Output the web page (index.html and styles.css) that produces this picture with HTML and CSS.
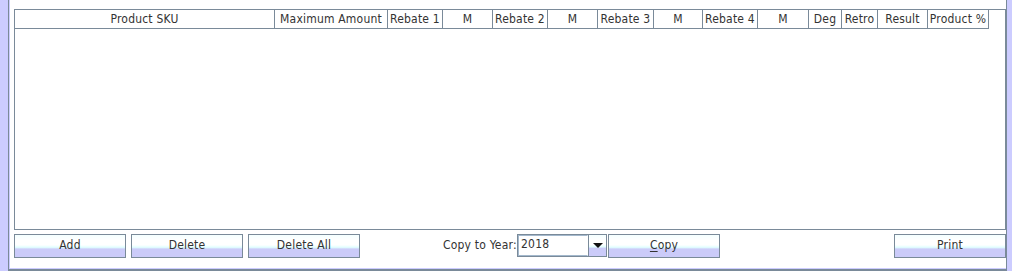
FILE: index.html
```html
<!DOCTYPE html>
<html>
<head>
<meta charset="utf-8">
<link rel="stylesheet" href="styles.css">
</head>
<body>
<div class="frame">
  <div class="panel">
    <div class="table">
      <div class="thead">
        <div class="th w-sku">Product SKU</div>
        <div class="th w-max">Maximum Amount</div>
        <div class="th w-55">Rebate 1</div>
        <div class="th w-50">M</div>
        <div class="th w-55">Rebate 2</div>
        <div class="th w-50">M</div>
        <div class="th w-56">Rebate 3</div>
        <div class="th w-49">M</div>
        <div class="th w-55">Rebate 4</div>
        <div class="th w-51">M</div>
        <div class="th w-deg">Deg</div>
        <div class="th w-retro">Retro</div>
        <div class="th w-50">Result</div>
        <div class="th w-pct">Product %</div>
        <div class="th-filler"></div>
      </div>
      <div class="tbody"></div>
    </div>
    <div class="toolbar">
      <button class="btn">Add</button>
      <button class="btn">Delete</button>
      <button class="btn">Delete All</button>
      <span class="year-label">Copy to Year:</span>
      <div class="combo">
        <div class="combo-field">2018</div>
        <div class="combo-arrow"><span class="tri"></span></div>
      </div>
      <button class="btn btn-copy"><u>C</u>opy</button>
      <button class="btn btn-print">Print</button>
    </div>
  </div>
</div>
</body>
</html>
```

FILE: styles.css
```css
html, body {
  margin: 0;
  padding: 0;
  background: #ffffff;
}

body {
  font-family: "DejaVu Sans Condensed", "DejaVu Sans", sans-serif;
  font-size: 12px;
  color: #333333;
}

.frame {
  width: 1012px;
  height: 271px;
  box-sizing: border-box;
  padding: 0 5px 0 8px;
  background: #ccccff;
}

.panel {
  height: 271px;
  box-sizing: border-box;
  border-left: 1px solid #7a8a99;
  border-right: 1px solid #7a8a99;
  border-bottom: 2px solid #7a8a99;
  background: #ffffff;
  box-shadow: inset 1px -1px 0 #ccccff;
  padding: 9px 0 0 5px;
  display: flex;
  flex-direction: column;
}

.table {
  width: 992px;
  height: 221px;
  box-sizing: border-box;
  border: 1px solid #7a8a99;
  background: #ffffff;
  display: flex;
  flex-direction: column;
}

.thead {
  display: flex;
  height: 19px;
  flex: none;
}

.th {
  box-sizing: border-box;
  height: 19px;
  border-right: 1px solid #7a8a99;
  border-bottom: 1px solid #7a8a99;
  text-align: center;
  line-height: 18px;
  white-space: nowrap;
  overflow: hidden;
  color: #333333;
  letter-spacing: 0.2px;
}

.th-filler {
  flex: 1;
}

.w-sku { width: 260px; }
.w-max { width: 113px; }
.w-55 { width: 55px; }
.w-50 { width: 50px; }
.w-56 { width: 56px; }
.w-49 { width: 49px; }
.w-51 { width: 51px; }
.w-deg { width: 33px; }
.w-retro { width: 36px; }
.w-pct { width: 61px; }

.tbody {
  flex: 1;
}

.toolbar {
  display: flex;
  align-items: flex-start;
  margin-top: 4px;
  height: 24px;
}

.btn {
  box-sizing: border-box;
  width: 112px;
  height: 24px;
  margin: 0 5px 0 0;
  padding: 0 0 3px 0;
  border: 1px solid #7a8a99;
  background: linear-gradient(180deg, #f4ffff 0%, #ffffff 25%, #ffffff 45%, #e2ffff 56%, #cbcbf9 64%, #cbcbf9 100%);
  font-family: "DejaVu Sans Condensed", "DejaVu Sans", sans-serif;
  font-size: 12px;
  color: #333333;
  line-height: 18px;
  text-align: center;
  letter-spacing: 0.2px;
}

.btn u {
  text-decoration: underline;
  text-underline-offset: 2px;
}

.year-label {
  margin-left: 78px;
  line-height: 22px;
  color: #333333;
  width: 74px;
  white-space: nowrap;
  letter-spacing: 0.2px;
}

.combo {
  display: flex;
  width: 90px;
  height: 23px;
  box-sizing: border-box;
  border: 1px solid #7a8a99;
}

.combo-field {
  flex: 1;
  box-sizing: border-box;
  border: 1px solid #a3b8cc;
  border-right-color: #ffffff;
  background: #ffffff;
  padding-left: 2px;
  line-height: 16px;
  color: #333333;
  letter-spacing: 0.2px;
}

.combo-arrow {
  width: 18px;
  box-sizing: border-box;
  border-left: 1px solid #7a8a99;
  background: linear-gradient(180deg, #f4ffff 0%, #ffffff 25%, #ffffff 45%, #e2ffff 56%, #cbcbf9 64%, #cbcbf9 100%);
  display: flex;
  align-items: center;
  justify-content: center;
}

.tri {
  width: 0;
  height: 0;
  border-left: 5px solid transparent;
  border-right: 5px solid transparent;
  border-top: 5px solid #111111;
}

.btn-copy {
  margin-left: 1px;
}

.btn-print {
  margin-left: auto;
  margin-right: 0;
}
```
